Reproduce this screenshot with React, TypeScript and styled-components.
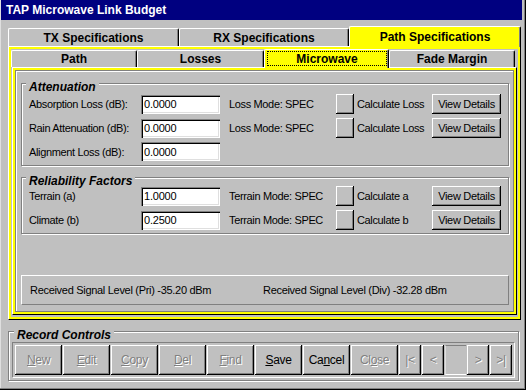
import React from 'react';
import styled, { createGlobalStyle, css } from 'styled-components';

const GlobalStyle = createGlobalStyle`
  html, body {
    margin: 0;
    padding: 0;
    background: #c0c0c0;
  }
  body {
    font-family: 'Liberation Sans', Arial, sans-serif;
    font-size: 11px;
    color: #000;
  }
  * {
    box-sizing: border-box;
  }
`;

const raised = css`
  box-shadow:
    inset -1px -1px 0 #000,
    inset 1px 1px 0 #fff,
    inset -2px -2px 0 #808080;
`;

const sunken = css`
  box-shadow:
    inset 1px 1px 0 #808080,
    inset 2px 2px 0 #000,
    inset -1px -1px 0 #fff,
    inset -2px -2px 0 #dfdfdf;
`;

type TabDef = { label: string; width: number };

const outerTabs: TabDef[] = [
  { label: 'TX Specifications', width: 171 },
  { label: 'RX Specifications', width: 170 },
  { label: 'Path Specifications', width: 172 },
];

const innerTabs: TabDef[] = [
  { label: 'Path', width: 126 },
  { label: 'Losses', width: 127 },
  { label: 'Microwave', width: 125 },
  { label: 'Fade Margin', width: 126 },
];

type CalcRow = {
  label: string;
  value: string;
  mode: string;
  calc: string;
  hasActions: boolean;
};

const attenuationRows: CalcRow[] = [
  { label: 'Absorption Loss (dB):', value: '0.0000', mode: 'Loss Mode: SPEC', calc: 'Calculate Loss', hasActions: true },
  { label: 'Rain Attenuation (dB):', value: '0.0000', mode: 'Loss Mode: SPEC', calc: 'Calculate Loss', hasActions: true },
  { label: 'Alignment Loss (dB):', value: '0.0000', mode: '', calc: '', hasActions: false },
];

const reliabilityRows: CalcRow[] = [
  { label: 'Terrain (a)', value: '1.0000', mode: 'Terrain Mode: SPEC', calc: 'Calculate a', hasActions: true },
  { label: 'Climate (b)', value: '0.2500', mode: 'Terrain Mode: SPEC', calc: 'Calculate b', hasActions: true },
];

type RecordButton = { pre: string; key: string; post: string; enabled: boolean };

const recordButtons: RecordButton[] = [
  { pre: '', key: 'N', post: 'ew', enabled: false },
  { pre: '', key: 'E', post: 'dit', enabled: false },
  { pre: '', key: 'C', post: 'opy', enabled: false },
  { pre: '', key: 'D', post: 'el', enabled: false },
  { pre: '', key: 'F', post: 'ind', enabled: false },
  { pre: '', key: 'S', post: 'ave', enabled: true },
  { pre: 'Ca', key: 'n', post: 'cel', enabled: true },
  { pre: 'Cl', key: 'o', post: 'se', enabled: false },
];

const App: React.FC = () => {
  return (
    <>
      <GlobalStyle />
      <Window>
        <TitleBar>TAP Microwave Link Budget</TitleBar>

        <Client>
          <TabStrip $height={20}>
            {outerTabs.map((tab, i) => (
              <Tab key={tab.label} $width={tab.width} $height={i === 2 ? 21 : 18} $active={i === 2}>
                {tab.label}
              </Tab>
            ))}
          </TabStrip>

          <Panel>
            <PanelBody>
              <TabStrip $height={18}>
                {innerTabs.map((tab, i) => (
                  <Tab key={tab.label} $width={tab.width} $height={i === 2 ? 19 : 17} $active={i === 2}>
                    {i === 2 ? <Focus>{tab.label}</Focus> : tab.label}
                  </Tab>
                ))}
              </TabStrip>

              <InnerPanel>
                <InnerBody>
                  <Group>
                    <Legend>Attenuation</Legend>
                    <Rows>
                      {attenuationRows.map((row) => (
                        <FieldRow key={row.label} row={row} />
                      ))}
                    </Rows>
                  </Group>

                  <Group>
                    <Legend>Reliability Factors</Legend>
                    <Rows $shift={-2}>
                      {reliabilityRows.map((row) => (
                        <FieldRow key={row.label} row={row} />
                      ))}
                    </Rows>
                  </Group>

                  <StatusBox>
                    <span>Received Signal Level (Pri) -35.20 dBm</span>
                    <span>Received Signal Level (Div) -32.28 dBm</span>
                  </StatusBox>
                </InnerBody>
              </InnerPanel>
            </PanelBody>
          </Panel>

          <RecordGroup>
            <Legend $indent={2}>Record Controls</Legend>
            <ButtonWell>
              {recordButtons.map((b) => (
                <RecButton key={b.key + b.post} $disabled={!b.enabled}>
                  {b.pre}
                  <u>{b.key}</u>
                  {b.post}
                </RecButton>
              ))}
              <NavButton $width={22} $disabled>|&lt;</NavButton>
              <NavButton $width={22} $disabled>&lt;</NavButton>
              <NavField />
              <NavButton $width={22} $disabled>&gt;</NavButton>
              <NavButton $width={22} $disabled>&gt;|</NavButton>
            </ButtonWell>
          </RecordGroup>
        </Client>
      </Window>
    </>
  );
};

const FieldRow: React.FC<{ row: CalcRow }> = ({ row }) => (
  <Row>
    <Label>{row.label}</Label>
    <Input>{row.value}</Input>
    {row.hasActions && (
      <>
        <Label>{row.mode}</Label>
        <SquareButton />
        <Label>{row.calc}</Label>
        <DetailButton>View Details</DetailButton>
      </>
    )}
  </Row>
);

const Window = styled.div`
  width: 526px;
  height: 390px;
  display: flex;
  flex-direction: column;
  background: #c0c0c0;
  padding: 0 4px 4px 1px;
  box-shadow:
    inset -1px -1px 0 #000,
    inset -2px -2px 0 #808080,
    inset 1px 0 0 #dfdfdf;
`;

const TitleBar = styled.div`
  height: 20px;
  flex: none;
  display: flex;
  align-items: center;
  padding-left: 5px;
  background: #000080;
  color: #fff;
  font-size: 12px;
  font-weight: bold;
`;

const Client = styled.div`
  flex: 1;
  display: flex;
  flex-direction: column;
  padding: 6px 1px 5px 7px;
`;

const TabStrip = styled.div<{ $height: number }>`
  display: flex;
  align-items: flex-end;
  height: ${({ $height }) => $height}px;
  flex: none;
`;

const Tab = styled.div<{ $width: number; $height: number; $active?: boolean }>`
  width: ${({ $width }) => $width}px;
  height: ${({ $height }) => $height}px;
  display: flex;
  align-items: center;
  justify-content: center;
  background: ${({ $active }) => ($active ? '#ffff00' : '#c0c0c0')};
  border-top: 1px solid #fff;
  border-left: 1px solid #fff;
  border-right: 1px solid #000;
  border-radius: 2px 2px 0 0;
  box-shadow: inset -1px 0 0 #808080;
  font-size: 12px;
  font-weight: bold;
  margin-bottom: ${({ $active }) => ($active ? -1 : 0)}px;
  position: relative;
  z-index: ${({ $active }) => ($active ? 1 : 0)};
`;

const Focus = styled.span`
  align-self: stretch;
  flex: 1;
  display: flex;
  align-items: center;
  justify-content: center;
  margin: 1px 1px 2px 2px;
  border: 1px dotted #000;
`;

const Panel = styled.div`
  flex: 1;
  display: flex;
  flex-direction: column;
  padding: 2px;
  background: #ffff00;
  border-top: 1px solid #fff;
  border-left: 1px solid #fff;
  border-right: 1px solid #000;
  border-bottom: 1px solid #000;
`;

const PanelBody = styled.div`
  flex: 1;
  display: flex;
  flex-direction: column;
  background: #c0c0c0;
  padding: 0 1px 2px 0;
`;

const InnerPanel = styled.div`
  flex: 1;
  display: flex;
  margin-left: 1px;
  padding: 2px;
  background: #ffff00;
  border-top: 1px solid #fff;
  border-left: 1px solid #fff;
  border-right: 1px solid #000;
  border-bottom: 1px solid #000;
`;

const InnerBody = styled.div`
  flex: 1;
  display: flex;
  flex-direction: column;
  padding: 1px 4px 6px 5px;
  background: #c0c0c0;
  border: 1px solid #808080;
  box-shadow: inset 1px 1px 0 #fff;
`;

const Group = styled.fieldset`
  margin: 0;
  padding: 0 0 4px 4px;
  border: 1px solid #808080;
  box-shadow:
    inset 1px 1px 0 #fff,
    1px 1px 0 #fff;
`;

/* text sits a few px under the frame line, as in the old VB forms */
const Legend = styled.legend<{ $indent?: number }>`
  padding: 8px 3px 0;
  margin-left: ${({ $indent = 0 }) => $indent}px;
  line-height: 14px;
  font-size: 12px;
  font-weight: bold;
  font-style: italic;
  background: linear-gradient(#c0c0c0, #c0c0c0) 0 10px / 100% 100% no-repeat;
`;

const Rows = styled.div<{ $shift?: number }>`
  display: flex;
  flex-direction: column;
  gap: 5px;
  padding-left: 3px;
  margin-top: ${({ $shift = 0 }) => $shift}px;
`;

const Row = styled.div`
  display: grid;
  grid-template-columns: 112px 88px 107px 21px 75px 69px;
  align-items: center;
  height: 19px;
`;

const Label = styled.span`
  white-space: nowrap;
  letter-spacing: -0.35px;
`;

const Input = styled.div`
  width: 79px;
  height: 19px;
  display: flex;
  align-items: center;
  padding: 0 3px;
  background: #fff;
  letter-spacing: -0.2px;
  ${sunken};
`;

const SquareButton = styled.div`
  width: 18px;
  height: 20px;
  background: #c0c0c0;
  ${raised};
`;

const DetailButton = styled.div`
  width: 69px;
  height: 20px;
  display: flex;
  align-items: center;
  justify-content: center;
  letter-spacing: -0.3px;
  ${raised};
`;

const StatusBox = styled.div`
  margin-top: auto;
  height: 30px;
  display: grid;
  grid-template-columns: 233px 1fr;
  align-items: center;
  padding-left: 8px;
  letter-spacing: -0.3px;
  border-top: 1px solid #fff;
  border-left: 1px solid #fff;
  border-right: 1px solid #808080;
  border-bottom: 1px solid #808080;
`;

const RecordGroup = styled.fieldset`
  flex: none;
  margin: 0 3px 0 0;
  padding: 0 3px 2px 3px;
  border: 1px solid #808080;
  box-shadow:
    inset 1px 1px 0 #fff,
    1px 1px 0 #fff;
`;

const ButtonWell = styled.div`
  display: flex;
  gap: 1px;
  padding: 2px;
  border-top: 1px solid #808080;
  border-left: 1px solid #808080;
  border-right: 1px solid #fff;
  border-bottom: 1px solid #fff;
`;

const disabledText = css`
  color: #808080;
  text-shadow: 1px 1px 0 #fff;
`;

const RecButton = styled.div<{ $disabled?: boolean }>`
  width: 47px;
  height: 30px;
  display: flex;
  align-items: center;
  justify-content: center;
  font-size: 12px;
  letter-spacing: -0.3px;
  ${raised};
  ${({ $disabled }) => $disabled && disabledText};
`;

const NavButton = styled(RecButton)<{ $width: number }>`
  width: ${({ $width }) => $width}px;
`;

const NavField = styled.div`
  width: 21px;
  height: 30px;
  border-top: 1px solid #808080;
  border-bottom: 1px solid #fff;
  border-left: 1px solid #dfdfdf;
`;

export default App;
